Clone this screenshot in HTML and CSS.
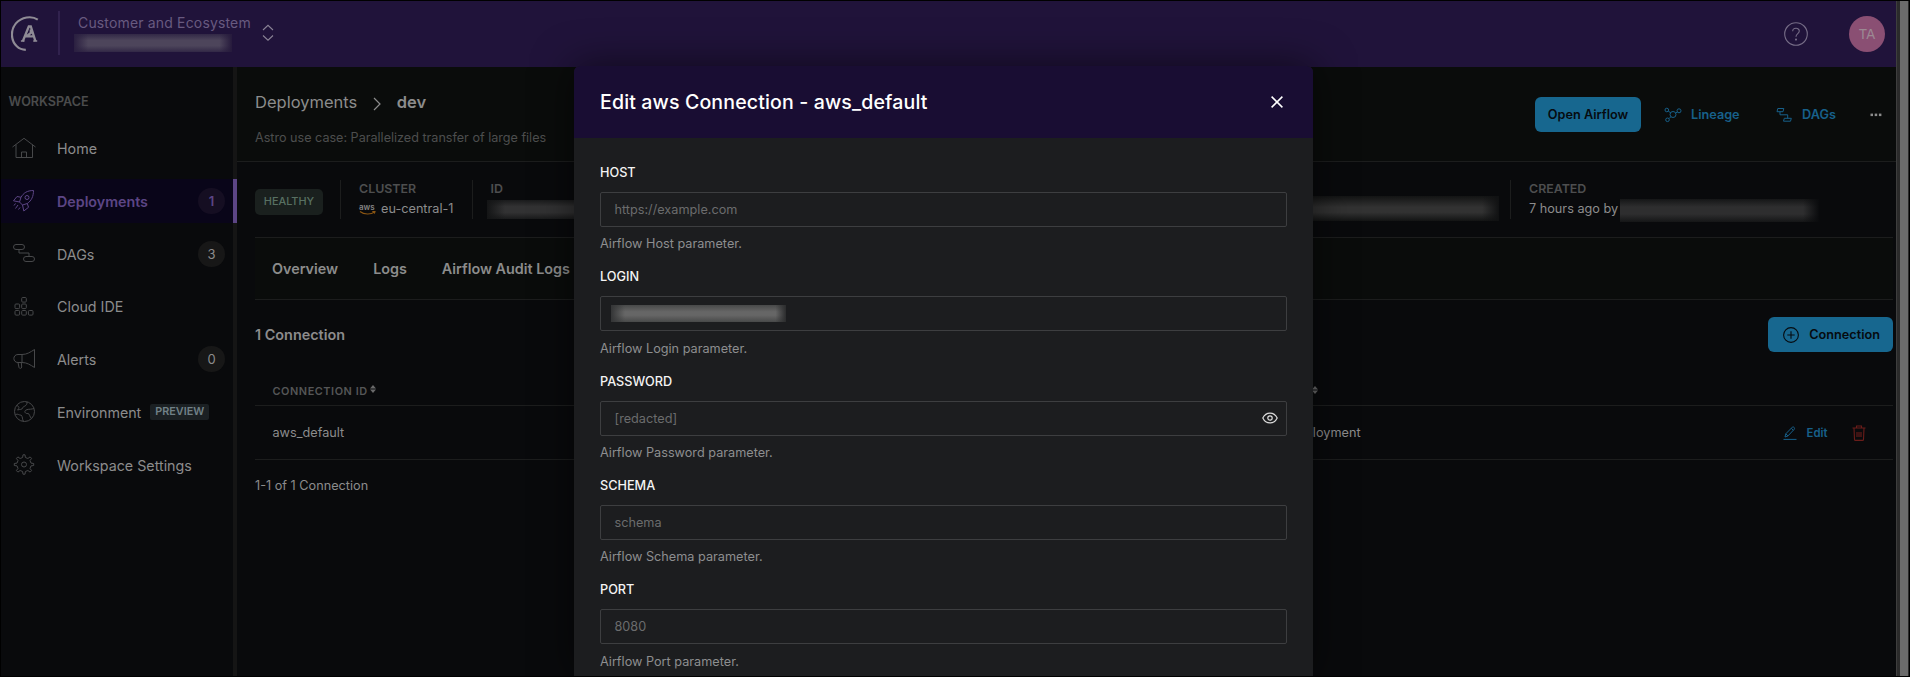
FILE: index.html
```html
<!DOCTYPE html>
<html lang="en">
<head>
<meta charset="utf-8">
<title>Edit aws Connection - aws_default</title>
<link rel="stylesheet" href="styles.css">
</head>
<body>
<div class="window">
  <div class="app">
    <header class="topbar">
      <svg class="logo" viewBox="0 0 28 36" fill="none" stroke="#8f8b95" stroke-width="2.2"><path d="M26.8 3.6C20.500-.5 10.500.9 4.900 7.400C-.8 14.200-.2 24.500 5.800 30.200C8.500 32.800 11.500 33.700 14.800 33.800"/><path d="M11.800 25.200L17.800 10.500H19.800L24.400 25.200M19.800 13.500V17L15.500 20.300H22.700" stroke-width="2.300"/><path d="M9.900 25.100H13.500M22.200 25.100H26.200" stroke-width="1.500"/></svg>
      <span class="topbar-divider"></span>
      <div class="org">
        <span class="org-name">Customer and Ecosystem</span>
        <span class="redact redact-org"></span>
      </div>
      <svg class="switcher" viewBox="0 0 12 18" fill="none" stroke="#8a8395" stroke-width="1.1"><path d="M1 6L6 1.300L11 6M1 11.500L6 16.200L11 11.500"/></svg>
      <svg class="help" viewBox="0 0 24 24" fill="none" stroke="#766d87" stroke-width="1.100"><circle cx="12" cy="12" r="11.300"/><path d="M8.700 9.200C8.700 5.300 15.300 5.300 15.300 9.100C15.300 11.800 12 11.500 12 14.800"/><circle cx="12" cy="17.600" r=".5"/></svg>
      <span class="avatar">TA</span>
    </header>
    <div class="body">
      <nav class="sidebar">
        <h2 class="nav-title">Workspace</h2>
        <a class="nav-item"><svg class="nav-icon" viewBox="0 0 24 24"><path d="M.5 10L12 1.300L23.500 10M4 7.500V20.500H20.500V7.500M9.500 20.500V15H14.500V20.500"/></svg>Home</a>
        <a class="nav-item active"><svg class="nav-icon" viewBox="0 0 24 24"><path d="M21.500 1.500C15 1.500 11.500 4 9 8.300L7.500 13L10.500 16L15.300 14.500C19.500 11.500 21.500 7.500 21.500 1.500ZM9 8.300L5 7.500L1.500 11.800L7.500 13M15.300 14.500L16.500 18.300L11.800 22L10.500 16M3.500 14.500L2 16.500M6 16L3.500 19.500M8 18.500L6.500 20.500"/><circle cx="15" cy="8.500" r="2"/></svg>Deployments<span class="count">1</span></a>
        <a class="nav-item"><svg class="nav-icon" viewBox="0 0 24 24"><rect x="1.500" y="2.500" width="11" height="5" rx="2.500"/><rect x="11.500" y="14.500" width="11" height="5" rx="2.500"/><path d="M7 7.500V11H17V14.500"/></svg>DAGs<span class="count">3</span></a>
        <a class="nav-item"><svg class="nav-icon" viewBox="0 0 24 24"><rect x="9.700" y="2.500" width="4.600" height="4.600" rx="1"/><rect x="3" y="9" width="4.600" height="4.600" rx="1"/><rect x="9.700" y="9" width="4.600" height="4.600" rx="1"/><rect x="3" y="15.500" width="4.600" height="4.600" rx="1"/><rect x="9.700" y="15.500" width="4.600" height="4.600" rx="1"/><rect x="16.400" y="15.500" width="4.600" height="4.600" rx="1"/></svg>Cloud IDE</a>
        <a class="nav-item"><svg class="nav-icon" viewBox="0 0 24 24"><path d="M10 6.500H6C.5 6.500.5 14.500 6 14.500H10C15 14.500 18.500 17 22.500 19.500V1.500C18.500 4 15 6.500 10 6.500ZM10 6.500V14.500M6 14.500L7 19.500C7.300 20.700 9.700 20.700 9.700 19L9.300 14.500"/></svg>Alerts<span class="count">0</span></a>
        <a class="nav-item"><svg class="nav-icon" viewBox="0 0 24 24"><circle cx="12.500" cy="11.500" r="10"/><path d="M5 5.500C8 7 7 8.500 5.500 10C8 9 10 10 10.500 8C11 6 15.500 6.500 15 1.800M3.200 15C6 13 7 15.500 9 15C11 17 10 19 11.500 21.500M22 8C20 10 17 8.500 14 10C11.500 11.500 13.500 14 16 13.500C18 14 17.500 17 19.500 18.500"/></svg>Environment<span class="preview">PREVIEW</span></a>
        <a class="nav-item"><svg class="nav-icon" viewBox="0 0 24 24"><circle cx="12" cy="11.500" r="2.500"/><path d="M10.600 4.500L11 1.800H13L13.400 4.500L15.900 5.500L18.100 3.900L19.600 5.400L18 7.600L19 10.100L21.700 10.500V12.500L19 12.900L18 15.400L19.600 17.600L18.100 19.100L15.900 17.500L13.400 18.500L13 21.200H11L10.600 18.500L8.100 17.500L5.900 19.100L4.400 17.600L6 15.400L5 12.900L2.300 12.500V10.500L5 10.100L6 7.600L4.400 5.400L5.900 3.900L8.100 5.500Z" stroke-linejoin="round"/></svg>Workspace Settings</a>
      </nav>
      <main class="main">
        <section class="page-head">
          <div class="crumb-block">
            <div class="crumbs"><span>Deployments</span><svg class="crumb-arrow" viewBox="0 0 8 14" fill="none" stroke="#8c8c8c" stroke-width="1.200"><path d="M1 1L7 7L1 13"/></svg><b>dev</b></div>
            <p class="desc">Astro use case: Parallelized transfer of large files</p>
          </div>
          <div class="actions">
            <span class="btn">Open Airflow</span>
            <span class="link link-lineage"><svg class="link-icon" viewBox="0 0 18 16"><circle cx="9" cy="7.500" r="3"/><circle cx="2.800" cy="3" r="1.800"/><circle cx="15" cy="3.800" r="2"/><circle cx="3.500" cy="12.800" r="1.800"/><path d="M4.300 4.200L6.600 5.700M11.600 6.200L13.300 5M5 11.600L6.900 9.700"/></svg>Lineage</span>
            <span class="link link-dags"><svg class="link-icon" viewBox="0 0 18 16"><path d="M2.800 1.500H8.800L8 4.700H2L2.800 1.500ZM9.300 11.300H16.300L15.500 14.200H8.500ZM5 4.700V7.800H12.700V11.300"/></svg>DAGs</span>
            <svg class="more" viewBox="0 0 12 4" fill="#8c8c8c"><rect x=".5" y=".6" width="2.500" height="2.500"/><rect x="4.700" y=".6" width="2.500" height="2.500"/><rect x="8.900" y=".6" width="2.500" height="2.500"/></svg>
          </div>
        </section>
        <div class="content">
          <section class="info">
            <span class="status">HEALTHY</span>
            <div class="fact fact-cluster"><span class="fact-name">CLUSTER</span><span class="fact-value"><svg class="aws" viewBox="0 0 17 11" fill="none"><text x="0" y="6" class="aws-text">aws</text><path d="M1 7.500C5 10.800 12 10.800 15.500 8M13.300 7.500H16L15.400 9.600" stroke="#8a5512" stroke-width="1.100"/></svg>eu-central-1</span></div>
            <div class="fact fact-id"><span class="fact-name">ID</span><span class="redact redact-id"></span></div>
            <span class="redact redact-mid"></span>
            <div class="fact fact-created"><span class="fact-name">CREATED</span><span class="fact-value"><span class="created-text">7 hours ago by</span><span class="redact redact-user"></span></span></div>
          </section>
          <div class="tabs"><span>Overview</span><span>Logs</span><span>Airflow Audit Logs</span></div>
          <div class="list-head"><h3 class="list-title">1 Connection</h3><span class="btn btn-add"><svg class="plus" viewBox="0 0 16 16" fill="none" stroke="#060b0f" stroke-width="1.100"><circle cx="8" cy="8" r="7.400"/><path d="M8 4.300V11.700M4.300 8H11.700"/></svg>Connection</span></div>
          <div class="row row-head"><span class="cell-id">CONNECTION ID<svg class="sort" viewBox="0 0 6 8"><path d="M0 3.400L3 0L6 3.400ZM0 4.600L3 8L6 4.600Z"/></svg></span><span class="cell-scope"><svg class="sort sort-scope" viewBox="0 0 6 8"><path d="M0 3.400L3 0L6 3.400ZM0 4.600L3 8L6 4.600Z"/></svg></span></div>
          <div class="row row-data"><span class="cell-id">aws_default</span><span class="cell-scope">Deployment</span><span class="cell-edit"><svg class="pencil" viewBox="0 0 14 14"><path d="M.5 13.400H13.500M2 11L2.800 7.800L9.300 1.200C10.300.2 12.300 2 11.300 3.200L5 9.900ZM8.300 2.300L10.300 4.200M2.800 7.800L5 9.900"/></svg>Edit</span><svg class="trash" viewBox="0 0 14 16"><path d="M.5 3H13.500M4.500 3V1H9.500V3M2 3L2.500 14.400C2.500 15 3 15.400 3.500 15.400H10.500C11 15.400 11.500 15 11.500 14.400L12 3M5 7V12M7 7V12M9 7V12"/></svg></div>
          <p class="paging">1-1 of 1 Connection</p>
        </div>
      </main>
    </div>
  </div>
  <div class="scrollbar"><span class="thumb"></span></div>
  <div class="modal">
    <div class="modal-head"><h1 class="modal-title">Edit aws Connection - aws_default</h1><svg class="close" viewBox="0 0 12 12" fill="none" stroke="#fff" stroke-width="1.500"><path d="M.6.6L11.400 11.400M11.400.6L.6 11.400"/></svg></div>
    <div class="form">
      <div class="field"><label class="label">HOST</label><div class="input">https://example.com</div><p class="hint">Airflow Host parameter.</p></div>
      <div class="field"><label class="label">LOGIN</label><div class="input"><span class="redact redact-login"></span></div><p class="hint">Airflow Login parameter.</p></div>
      <div class="field"><label class="label">PASSWORD</label><div class="input">[redacted]<svg class="eye" viewBox="0 0 16 12" fill="none" stroke="#dcdcdc" stroke-width="1.200"><path d="M.8 6C4-.6 12-.6 15.200 6C12 12.600 4 12.600.8 6Z"/><circle cx="8" cy="6" r="2.200"/></svg></div><p class="hint">Airflow Password parameter.</p></div>
      <div class="field"><label class="label">SCHEMA</label><div class="input">schema</div><p class="hint">Airflow Schema parameter.</p></div>
      <div class="field"><label class="label">PORT</label><div class="input">8080</div><p class="hint">Airflow Port parameter.</p></div>
    </div>
  </div>
</div>
</body>
</html>
```
FILE: styles.css
```css
* { box-sizing: border-box; }
body { margin: 0; background: #000; font-family: Inter, "Liberation Sans", sans-serif; font-size: 12.7px; color: #8c8c8c; }
h1, h2, h3, p { margin: 0; }
svg { display: block; flex: none; }
.window { position: relative; width: 1910px; height: 677px; padding: 1px; overflow: hidden; display: flex; }
.app { width: 1895px; height: 675px; background: #090a0c; display: flex; flex-direction: column; }
.redact { display: block; flex: none; }

.topbar { height: 66px; background: #20133a; display: flex; align-items: center; flex: none; }
.logo { width: 28px; height: 36px; margin: 0 0 1px 10px; }
.topbar-divider { width: 2px; height: 44px; margin: 0 18px 3px 19px; background: #31224e; }
.org { width: 172px; height: 66px; padding-top: 12px; white-space: nowrap; }
.org-name { display: block; height: 21px; line-height: 20px; font-size: 14px; letter-spacing: .16px; color: #685a80; }
.redact-org { width: 158px; height: 18px; margin-left: -4px; background: linear-gradient(90deg, #2a1f40, transparent 9%, transparent 92%, #261a3c), linear-gradient(#322846, #4d455b 35%, #4d455b 65%, #322846); }
.switcher { width: 12px; height: 18px; margin: 0 0 2px 12px; }
.help { width: 24px; height: 24px; margin-left: auto; margin-top: -1px; }
.avatar { width: 36px; height: 36px; margin: 0 11px 1px 41px; border-radius: 50%; background: #8a4f73; color: #9c8993; font-size: 13.700px; line-height: 36px; text-align: center; }

.body { flex: 1; display: flex; min-height: 0; }
.sidebar { width: 236px; border-right: 4px solid #151515; padding-top: 26px; display: flex; flex-direction: column; flex: none; }
.nav-title { height: 18px; margin: 0 0 15px 7.500px; font-size: 12.6px; line-height: 18px; font-weight: 600; text-transform: uppercase; color: #4b4c4d; }
.nav-item { height: 44px; margin-bottom: 8.800px; padding: 1px 8px 0 11px; display: flex; align-items: center; font-size: 14.27px; white-space: nowrap; }
.nav-icon { width: 24px; height: 24px; margin-right: 21px; fill: none; stroke: #47484a; stroke-width: 1; }
.nav-item.active { width: 236px; background: #090519; border-right: 4px solid #5c4585; color: #5c4585; font-weight: 600; }
.active .nav-icon { stroke: #5c4585; }
.count { width: 27px; height: 26px; margin: 0 0 1px auto; border-radius: 13px; background: #171717; font-size: 13px; line-height: 26px; text-align: center; }
.active .count { background: #150e22; }
.preview { width: 59px; height: 16px; margin-left: 9px; border-radius: 2px; background: #1b2023; color: #718087; font-size: 10.800px; line-height: 16px; font-weight: 600; text-align: center; }

.main { flex: 1; min-width: 0; }
.page-head { height: 95px; padding: 0 14px 0 18px; background: #0a0c0b; border-bottom: 1px solid #1c1d1d; display: flex; justify-content: space-between; }
.crumb-block { padding-top: 23px; }
.crumbs { height: 24px; display: flex; align-items: center; font-size: 16.5px; }
.crumbs b { font-weight: 600; }
.crumb-arrow { width: 8px; height: 14px; margin: 3px 15.500px 0 16px; }
.desc { margin-top: 15px; line-height: 18px; font-size: 12.6px; color: #4d4e4e; }
.actions { height: 35px; margin-top: 30px; display: flex; align-items: center; font-weight: 600; }
.btn { height: 35px; padding: 0 13px; border-radius: 6px; background: #17678f; color: #060b0f; display: flex; align-items: center; font-weight: 600; }
.actions .btn { width: 106px; justify-content: center; padding: 0; }
.link { display: flex; align-items: center; color: #17608a; }
.link-icon { width: 18px; height: 16px; margin-right: 9px; fill: none; stroke: #17608a; stroke-width: 1; }
.link-lineage { width: 111px; margin-left: 23px; }
.link-dags { width: 95px; }
.more { width: 12px; height: 4px; }

.content { padding: 0 3px 0 18px; }
.info { height: 76px; border-bottom: 1px solid #1c1d1d; display: flex; align-items: flex-start; }
.status { width: 68px; height: 26px; margin: 27px 17px 0 0; border-radius: 5px; background: #1a201e; color: #587062; font-size: 10.900px; line-height: 25px; text-align: center; font-weight: 500; }
.fact { height: 39px; margin-top: 18px; padding-left: 18px; border-left: 1px solid #1c1d1d; white-space: nowrap; }
.fact-name { display: block; height: 16px; line-height: 17px; font-weight: 600; font-size: 12.4px; color: #4d4e4f; }
.fact-value { display: flex; align-items: center; height: 18px; margin-top: 3px; }
.fact-cluster { width: 132px; }
.aws { width: 17px; height: 11px; margin: 2px 5px 0 0; overflow: visible; }
.aws-text { font-size: 8px; font-weight: 600; fill: #858585; }
.fact-id { width: 120px; padding-left: 17.500px; }
.redact-id { width: 150px; height: 19px; margin: 4px 0 0 -3.500px; background: linear-gradient(90deg, #141516, transparent 12%), linear-gradient(#1a1b1c, #323233 35%, #323233 65%, #1a1b1c); }
.redact-mid { width: 240px; height: 25px; margin: 34px 11px 0 667px; background: linear-gradient(90deg, transparent 93%, #101112), linear-gradient(#131414, #323232 45%, #323232 65%, #131414); }
.fact-created { width: 320px; }
.created-text { width: 91px; }
.redact-user { width: 199px; height: 23px; margin-top: 4px; background: linear-gradient(90deg, transparent 92%, #0a0b0d), linear-gradient(#151617, #2e2e2f 35%, #2e2e2f 65%, #151617); }
.tabs { height: 62px; padding: 0 0 0 17px; border-bottom: 1px solid #1c1d1d; background: #0a0c0b; display: flex; gap: 35px; align-items: center; font-size: 14.37px; font-weight: 600; }
.list-head { height: 74px; padding-top: 17px; display: flex; justify-content: space-between; }
.list-title { line-height: 35px; font-size: 14.4px; font-weight: 600; }
.btn-add { width: 125px; padding: 0 13px 0 15px; justify-content: space-between; }
.plus { width: 16px; height: 16px; }
.row { padding-left: 17.500px; border-bottom: 1px solid #1c1d1d; display: flex; align-items: center; }
.row-head { height: 32px; padding-bottom: 0; font-size: 10.900px; font-weight: 600; letter-spacing: .55px; color: #555657; }
.row-head .cell-id { display: flex; align-items: center; padding-top: 2px; }
.sort { width: 6px; height: 8px; margin: -3px 0 0 2px; fill: #69696a; }
.sort-scope { margin: 0 0 0 23px; }
.row-data { height: 54px; }
.cell-id { width: 1016px; }
.cell-edit { width: 69px; margin-left: 425px; display: flex; align-items: center; font-size: 11.4px; font-weight: 600; color: #17608a; }
.cell-scope { width: 69px; }
.pencil { width: 14px; height: 14px; margin-right: 10px; fill: none; stroke: #17608a; stroke-width: 1; }
.trash { width: 14px; height: 16px; fill: none; stroke: #6b1d1a; stroke-width: 1.100; }
.paging { margin-top: 17px; line-height: 18px; }

.scrollbar { width: 13px; height: 675px; padding-left: 4px; background: #2b2b2b; border-left: 1px solid #3e3e3e; }
.thumb { display: block; width: 8px; height: 675px; margin-left: -1px; background: #6b6b6b; }

.modal { position: absolute; left: 574px; top: 66px; width: 739px; height: 610px; border-radius: 6px 6px 0 0; background: #1c1d1f; overflow: hidden; box-shadow: 0 0 40px rgba(0, 0, 0, .55); clip-path: inset(-60px -60px 0 -60px); }
.modal-head { height: 72px; padding: 0 30px 0 26px; background: #190d33; display: flex; align-items: center; justify-content: space-between; }
.modal-title { font-size: 19.57px; letter-spacing: .13px; font-weight: 500; color: #fff; }
.close { width: 12px; height: 12px; }
.form { padding: 26px 26px 0; }
.field { height: 104.35px; }
.label { display: block; height: 17.4px; line-height: 18.2px; font-weight: 500; color: #f4f4f4; }
.input { height: 35px; margin-top: 10.600px; padding: 0 8.500px 0 13.500px; border: 1px solid #3d3e40; border-radius: 2px; display: flex; align-items: center; color: #6b6c6d; }
.hint { margin-top: 8.200px; line-height: 17.4px; color: #8d8e8f; }
.eye { width: 16px; height: 12px; margin-left: auto; }
.redact-login { width: 175px; height: 17px; margin-left: -4px; background: linear-gradient(90deg, #343536, transparent 8%, transparent 94%, #2b2c2d), linear-gradient(#484949, #666 40%, #666 60%, #484949); }
```
